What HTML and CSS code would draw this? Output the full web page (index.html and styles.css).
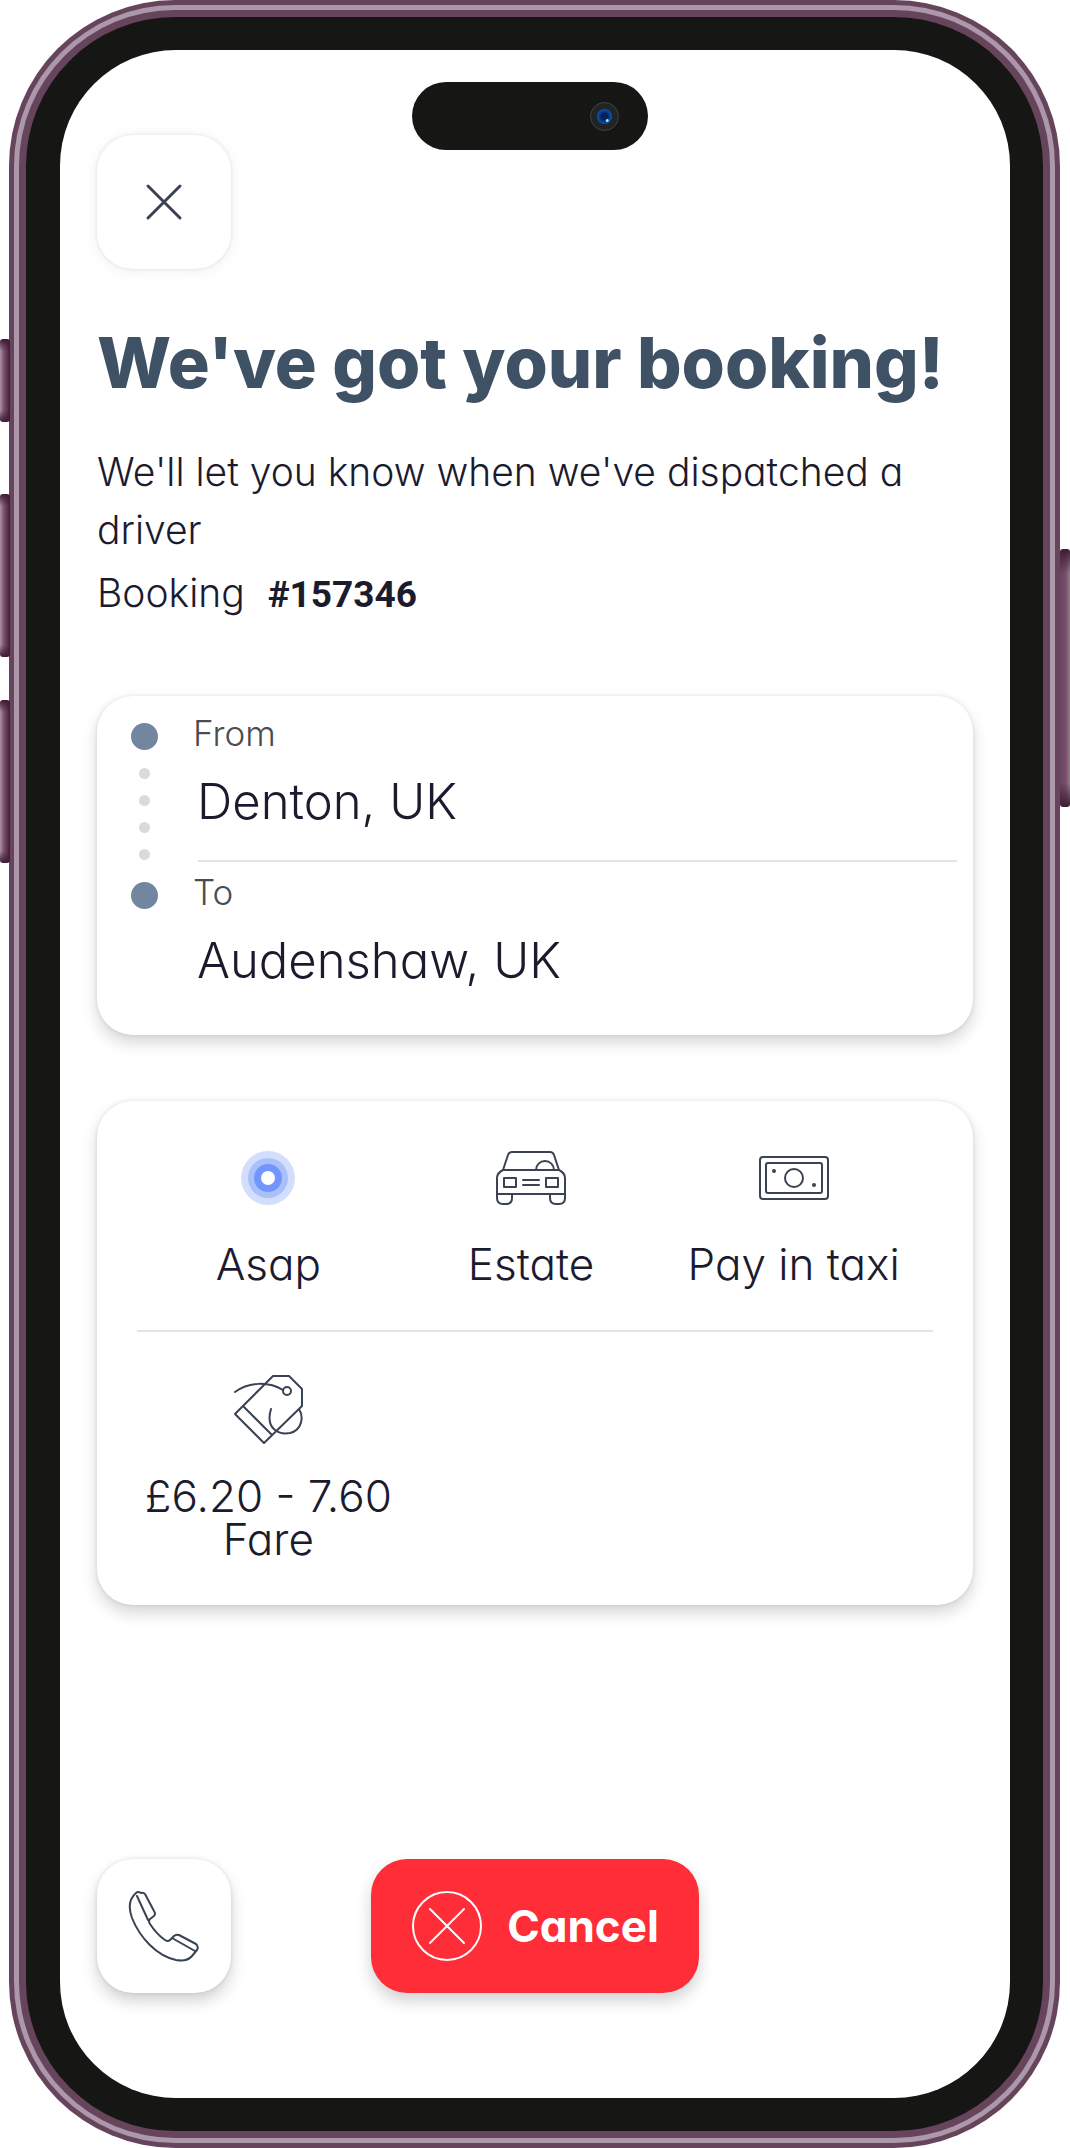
FILE: index.html
```
<!DOCTYPE html>
<html lang="en">
<head>
<meta charset="utf-8">
<meta name="viewport" content="width=device-width, initial-scale=1">
<title>Booking confirmed</title>
<link rel="stylesheet" href="styles.css">
</head>
<body>
<div class="device">
  <span class="key key-mute"></span>
  <span class="key key-up"></span>
  <span class="key key-down"></span>
  <span class="key key-power"></span>
  <div class="frame-outer"><div class="frame-shine"><div class="frame-inner"><div class="bezel">
    <main class="screen">
      <div class="island"><span class="camera"></span></div>

      <header class="top">
        <button class="tile tile-flat" type="button" aria-label="Close">
          <svg class="icon-close" viewBox="0 0 40 40"><path d="M4 4 36 36M36 4 4 36"/></svg>
        </button>
      </header>

      <section class="intro">
        <h1 class="title">We've got your booking!</h1>
        <p class="lead">We'll let you know when we've dispatched a driver</p>
        <p class="reference">Booking <strong class="number">#157346</strong></p>
      </section>

      <section class="card route">
        <div class="track">
          <span class="stop"></span>
          <span class="dots"><i class="dot"></i><i class="dot"></i><i class="dot"></i><i class="dot"></i></span>
          <span class="stop"></span>
        </div>
        <dl class="places">
          <div class="place"><dt class="place-label">From</dt><dd class="place-name">Denton, UK</dd></div>
          <div class="place"><dt class="place-label">To</dt><dd class="place-name">Audenshaw, UK</dd></div>
        </dl>
      </section>

      <section class="card details">
        <ul class="options">
          <li class="option">
            <svg class="icon" viewBox="0 0 72 72"><g stroke="none"><circle cx="36" cy="36" r="27" fill="#d3defc"/><circle cx="36" cy="36" r="20" fill="#aac0fb"/><circle cx="36" cy="36" r="14" fill="#7396fd"/><circle cx="36" cy="36" r="7" fill="#fff"/></g></svg>
            <span>Asap</span>
          </li>
          <li class="option">
            <svg class="icon" viewBox="0 0 72 72"><path d="M8 28 13 13Q14 10 17 10H55Q58 10 59 13L64 28M8 28H64M8 28Q2 31 2 36V52H70V36Q70 31 64 28M2 52V56Q2 62 8 62H11Q17 62 17 56V52M55 52V56Q55 62 61 62H64Q70 62 70 56V52M9 36H21V45H9ZM51 36H63V45H51ZM28 38H44M28 43H44M41 28A9 9 0 0 1 59 28"/></svg>
            <span>Estate</span>
          </li>
          <li class="option">
            <svg class="icon" viewBox="0 0 72 72"><rect x="2" y="15" width="68" height="42" rx="3"/><rect x="8" y="21" width="56" height="30" rx="2"/><circle cx="36" cy="36" r="9"/><g class="spots"><circle cx="16" cy="29" r="2"/><circle cx="56" cy="43" r="2"/></g></svg>
            <span>Pay in taxi</span>
          </li>
        </ul>
        <ul class="options options-fare">
          <li class="option">
            <svg class="icon" viewBox="0 0 72 72"><path d="M41 3H57L70 16V33L32 70 3 41ZM11 33 40 62M3 19C17 9 36 8 51 17M39 36C33 56 47 62 58 60C70 57 72 44 67 36"/><circle cx="55" cy="18" r="4"/></svg>
            <span class="fare">£6.20 - 7.60<br>Fare</span>
          </li>
        </ul>
      </section>

      <footer class="actions">
        <button class="tile" type="button" aria-label="Call">
          <svg class="icon" viewBox="0 0 72 72"><path d="M13 3Q10 1 8 3C1 9 0 17 4 28C12 48 29 66 48 70Q59 72 64 66L69 60Q71 57 68 54L51 45Q48 44 46 46L42 50Q40 52 37 50C31 46 26 40 22 34Q20 31 22 29L26 26Q28 24 26 21L17 4Q15 2 13 3M9 6 20 30M44 48 67 61"/></svg>
        </button>
        <button class="cancel" type="button">
          <svg class="icon" viewBox="0 0 72 72"><circle cx="36" cy="36" r="34"/><path d="M19 19 53 53M53 19 19 53"/></svg>
          Cancel
        </button>
      </footer>
    </main>
  </div></div></div></div>
</div>
</body>
</html>
```
FILE: styles.css
```
* {
  box-sizing: border-box;
}

body {
  margin: 0;
  background: #fff;
  color: #1c1b2e;
  font-family: Inter, "Liberation Sans", sans-serif;
  font-weight: 300;
  font-feature-settings: "cv11";
}

h1, p, dl, dd, ul {
  margin: 0;
  padding: 0;
}

ul {
  list-style: none;
}

button {
  border: 0;
  padding: 0;
  font: inherit;
  cursor: pointer;
}

svg {
  fill: none;
  stroke: #3a4353;
  stroke-width: 2;
  stroke-linecap: round;
  stroke-linejoin: round;
}

/* Handset */
.device {
  position: relative;
  display: flex;
  min-height: 100vh;
  padding: 0 10px 0 9px;
}

.frame-outer,
.frame-shine,
.frame-inner,
.bezel {
  display: flex;
  flex: 1;
}

.frame-outer {
  padding: 5px;
  border-radius: 166px;
  background: #66455c;
}

.frame-shine {
  padding: 5px;
  border-radius: 161px;
  background: #ad97ab;
}

.frame-inner {
  padding: 7px;
  border-radius: 156px;
  background: #66455c;
}

.bezel {
  padding: 33px 33px 33px 34px;
  border-radius: 149px;
  background: #161714;
}

.key {
  position: absolute;
  left: 0;
  width: 10px;
  border-radius: 3px;
  background: linear-gradient(#3d1c35, transparent 12px calc(100% - 12px), #3d1c35), linear-gradient(90deg, #a895a4, #7c4c6c 4px, #6b3f5d 6px, #3d1c35);
}

.key-mute { top: 339px; height: 83px; }
.key-up { top: 494px; height: 163px; }
.key-down { top: 700px; height: 163px; }
.key-power {
  top: 549px;
  right: 0;
  left: auto;
  height: 258px;
  background: linear-gradient(#3d1c35, transparent 24px calc(100% - 24px), #3d1c35), linear-gradient(90deg, #66455c, #7c4c6c 6px, #8d8289);
}

/* Screen */
.screen {
  position: relative;
  display: flex;
  flex: 1;
  flex-direction: column;
  padding: 85px 37px 105px;
  border-radius: 116px;
  background: #fff;
}

.island {
  position: absolute;
  top: 32px;
  left: 352px;
  width: 236px;
  height: 68px;
  border-radius: 34px;
  background: #161714;
}

.camera {
  position: absolute;
  top: 20px;
  right: 29px;
  width: 29px;
  height: 29px;
  border: 1px solid #414344;
  border-radius: 50%;
  background: radial-gradient(circle at 60% 65%, #b5d9ef 0 1px, transparent 2px), radial-gradient(circle, #04205e 0 3px, #0b51a8 7px, #202425 8px);
}

.top {
  display: flex;
}

.tile {
  display: flex;
  flex: none;
  align-items: center;
  justify-content: center;
  width: 134px;
  height: 134px;
  border-radius: 36px;
  background: #fff;
  box-shadow: 0 8px 16px rgb(0 0 0 / 18%), 0 0 4px rgb(0 0 0 / 10%);
}

.tile-flat {
  box-shadow: 0 2px 16px rgb(0 0 0 / 6%), 0 0 4px rgb(0 0 0 / 10%);
}

.icon-close {
  width: 40px;
  height: 40px;
  stroke-width: 3;
}

.icon {
  flex: none;
  width: 72px;
  height: 72px;
}

.spots {
  fill: #3a4353;
  stroke: none;
}

.intro {
  padding-top: 52px;
}

.title {
  color: #3f5165;
  font-size: 70px;
  font-weight: 800;
  line-height: 84px;
}

.lead {
  padding-top: 38px;
  font-size: 39px;
  line-height: 58px;
}

.reference {
  padding-top: 5px;
  font-size: 39px;
  line-height: 58px;
}

.number {
  padding-left: 12px;
  font-family: Roboto, "Liberation Sans", sans-serif;
  font-size: 37px;
  font-weight: 700;
}

.card {
  border-radius: 36px;
  background: #fff;
  box-shadow: 0 8px 16px rgb(0 0 0 / 16%), 0 0 4px rgb(0 0 0 / 10%);
}

/* Route */
.route {
  display: flex;
  gap: 32px;
  margin-top: 72px;
  padding: 0 16px 14px 34px;
}

.track {
  display: flex;
  flex-direction: column;
  align-items: center;
  gap: 18px;
  padding-top: 27px;
}

.stop {
  width: 27px;
  height: 27px;
  border-radius: 50%;
  background: #73869f;
}

.dots {
  display: flex;
  flex-direction: column;
  gap: 16px;
  padding-bottom: 4px;
}

.dot {
  width: 11px;
  height: 11px;
  border-radius: 50%;
  background: #d9dadd;
}

.places {
  flex: 1;
}

.place {
  padding: 16px 0 28px 3px;
  background: linear-gradient(#e2e3e5, #e2e3e5) 8px 100% / 100% 2px no-repeat;
}

.place:last-child {
  padding-top: 9px;
  background: none;
}

.place-label {
  color: #4b4c52;
  font-size: 35px;
  line-height: 42px;
}

.place-name {
  padding: 16px 0 0 4px;
  font-size: 49px;
  line-height: 64px;
}

/* Ride details */
.details {
  margin-top: 66px;
  padding: 41px 40px 44px;
}

.options {
  display: grid;
  grid-template-columns: repeat(3, 1fr);
  padding: 0 8px 38px 0;
  border-bottom: 2px solid #e2e3e5;
}

.options-fare {
  padding-top: 41px;
  padding-bottom: 0;
  border-bottom: 0;
}

.option {
  display: flex;
  flex-direction: column;
  align-items: center;
  gap: 22px;
  font-size: 44px;
  line-height: 56px;
  white-space: nowrap;
}

.fare {
  padding-top: 8px;
  line-height: 43px;
  text-align: center;
}

/* Bottom bar */
.actions {
  display: grid;
  grid-template-columns: 1fr auto 1fr;
  margin-top: auto;
}

.cancel {
  display: flex;
  align-items: center;
  gap: 24px;
  height: 134px;
  padding: 0 40px;
  border-radius: 36px;
  background: #ff2d38;
  box-shadow: 0 8px 16px rgb(0 0 0 / 18%);
  color: #fff;
  font-size: 44px;
  font-weight: 700;
}

.cancel .icon {
  stroke: #fff;
}
```
